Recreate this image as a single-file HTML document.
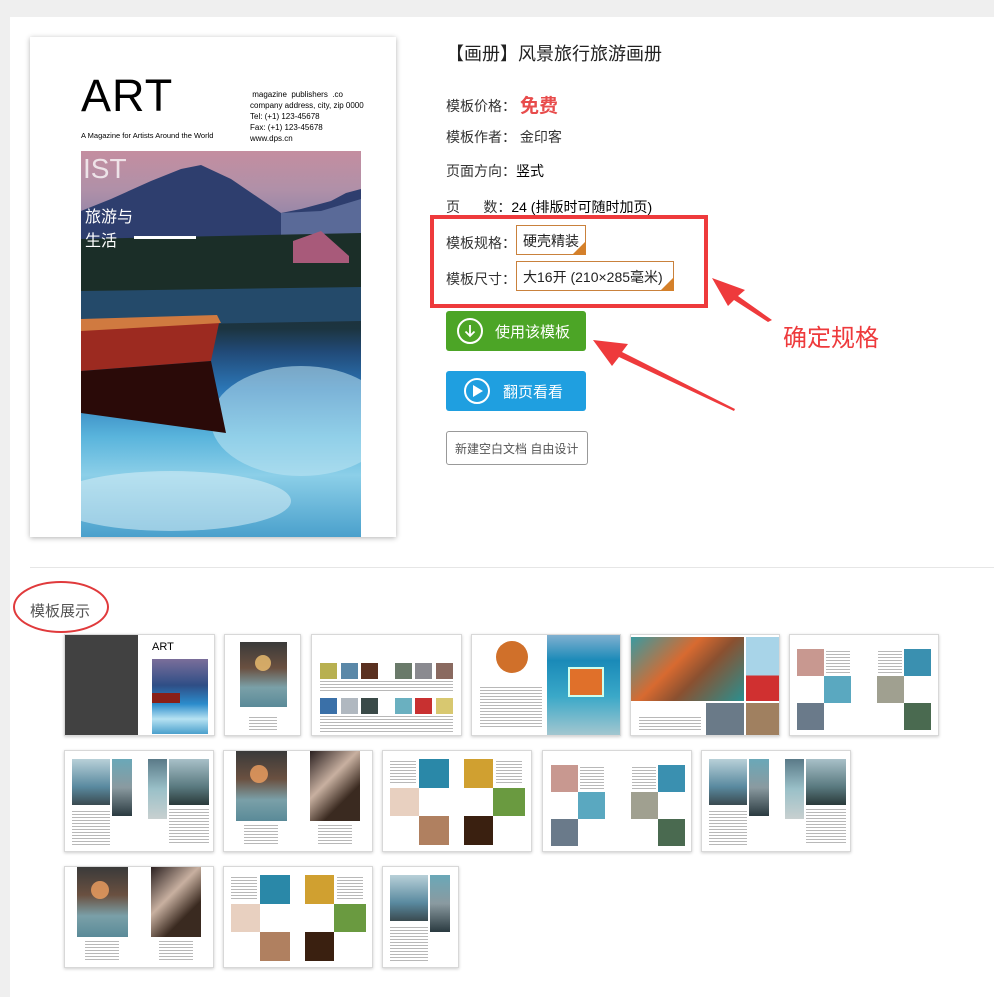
<!DOCTYPE html>
<html><head><meta charset="utf-8"><style>
*{margin:0;padding:0;box-sizing:border-box}
body{width:994px;height:990px;background:#efefef;position:relative;overflow:hidden;font-family:"Liberation Sans","Noto Sans CJK SC",sans-serif;color:#333}
.a{position:absolute}
.panel{left:10px;top:17px;width:990px;height:980px;background:#fff}
.t{position:absolute;background:#fff;border:1px solid #d8d8d8;box-shadow:0 1px 3px rgba(0,0,0,.2);overflow:hidden}
.t div{position:absolute}
.ln{background:repeating-linear-gradient(#999 0 1px,transparent 1px 3px);opacity:.7}
.lbl{font-size:14px;color:#333}
</style></head><body>
<div class="a panel"></div>

<!-- cover -->
<div class="a" style="left:30px;top:37px;width:366px;height:500px;background:#fff;box-shadow:0 1px 5px rgba(0,0,0,.3)"></div>
<div class="a" style="left:81px;top:70px;font-size:45px;color:#000;letter-spacing:1px">ART</div>
<div class="a" style="left:81px;top:131px;font-size:7.5px;color:#000">A Magazine for Artists Around the World</div>
<div class="a" style="left:250px;top:89px;font-size:8px;color:#000;line-height:11px">&nbsp;magazine &nbsp;publishers &nbsp;.co<br>company address, city, zip 0000<br>Tel: (+1) 123-45678<br>Fax: (+1) 123-45678<br>www.dps.cn</div>
<div class="a" style="left:81px;top:151px;width:280px;height:386px;overflow:hidden;background:linear-gradient(180deg,#c48ea0 0%,#b090a8 10%,#8a82a8 20%,#4a5a80 30%,#1f3038 40%,#1c3440 46%,#214a78 52%,#2c78b8 62%,#59b4dc 74%,#8ccfe8 84%,#4aa0cc 100%)">
  <svg width="280" height="386" style="position:absolute;left:0;top:0">
    <polygon points="0,60 30,48 70,30 100,18 120,14 150,28 175,45 200,62 220,58 250,50 265,42 280,38 280,120 0,120" fill="#2e3e6e"/>
    <polygon points="200,62 240,60 280,48 280,90 200,90" fill="#5a6a98"/>
    <polygon points="0,88 280,82 280,140 0,142" fill="#1b2e28"/>
    <polygon points="0,140 280,136 280,170 0,175" fill="#244a6a"/>
    <polygon points="212,90 240,80 268,105 268,112 212,112" fill="#a85a7a"/>
    <ellipse cx="220" cy="270" rx="90" ry="55" fill="#bfe6f3" opacity=".55"/>
    <ellipse cx="90" cy="350" rx="120" ry="30" fill="#d9eef6" opacity=".55"/>
    <polygon points="0,176 138,172 130,210 0,220" fill="#9c2a20"/>
    <polygon points="0,168 136,164 140,172 0,180" fill="#d07a40"/>
    <polygon points="0,220 130,210 145,282 0,262" fill="#2a0a08"/>
  </svg>
  <div class="a" style="left:2px;top:2px;font-size:28px;color:rgba(255,255,255,.75)">IST</div>
  <div class="a" style="left:4px;top:52px;font-size:16px;color:#fff;font-family:'Noto Sans CJK SC',sans-serif">旅游与</div>
  <div class="a" style="left:4px;top:76px;font-size:16px;color:#fff;font-family:'Noto Sans CJK SC',sans-serif">生活</div>
  <div class="a" style="left:53px;top:85px;width:62px;height:3px;background:#fff"></div>
</div>

<!-- info -->
<div class="a" style="left:446px;top:40px;font-size:18px;color:#222">【画册】风景旅行旅游画册</div>
<div class="a lbl" style="left:446px;top:96px">模板价格：</div>
<div class="a" style="left:520px;top:91px;font-size:19px;color:#e84c4c;font-weight:bold">免费</div>
<div class="a lbl" style="left:446px;top:127px">模板作者： 金印客</div>
<div class="a lbl" style="left:446px;top:161px">页面方向：<span style="color:#000">竖式</span></div>
<div class="a lbl" style="left:446px;top:197px">页 &nbsp; &nbsp; &nbsp;数：<span style="color:#000">24 (排版时可随时加页)</span></div>
<div class="a" style="left:430px;top:215px;width:278px;height:93px;border:4px solid #ee3a3c"></div>
<div class="a lbl" style="left:446px;top:233px">模板规格：</div>
<div class="a" style="left:516px;top:225px;width:70px;height:30px;border:1px solid #c9813c;font-size:14px;padding:5px 0 0 6px;color:#222">硬壳精装</div>
<div class="a" style="left:572px;top:241px;width:0;height:0;border-left:14px solid transparent;border-bottom:14px solid #d4802a"></div>
<div class="a lbl" style="left:446px;top:269px">模板尺寸：</div>
<div class="a" style="left:516px;top:261px;width:158px;height:30px;border:1px solid #c9813c;font-size:14px;padding:5px 0 0 6px;color:#222;white-space:nowrap">大16开 (210×285毫米)</div>
<div class="a" style="left:660px;top:277px;width:0;height:0;border-left:14px solid transparent;border-bottom:14px solid #d4802a"></div>

<div class="a" style="left:446px;top:311px;width:140px;height:40px;background:#4ca526;border-radius:3px;color:#fff;font-size:15px">
  <div class="a" style="left:11px;top:7px;width:26px;height:26px;border:2px solid #fff;border-radius:50%"></div>
  <svg class="a" style="left:16px;top:12px" width="16" height="16"><path d="M8 2v11M3.5 8.5L8 13l4.5-4.5" stroke="#fff" stroke-width="1.8" fill="none"/></svg>
  <div class="a" style="left:49px;top:10px">使用该模板</div>
</div>
<div class="a" style="left:446px;top:371px;width:140px;height:40px;background:#1f9fe0;border-radius:3px;color:#fff;font-size:15px">
  <div class="a" style="left:18px;top:7px;width:26px;height:26px;border:2px solid #fff;border-radius:50%"></div>
  <svg class="a" style="left:26px;top:14px" width="12" height="12"><polygon points="1,0 11,6 1,12" fill="#fff"/></svg>
  <div class="a" style="left:57px;top:10px">翻页看看</div>
</div>
<div class="a" style="left:446px;top:431px;width:142px;height:34px;border:1px solid #999;border-radius:3px;font-size:12px;color:#555;padding:8px 0 0 8px">新建空白文档 自由设计</div>

<div class="a" style="left:783px;top:318px;font-size:24px;color:#ee3a3c">确定规格</div>
<svg class="a" style="left:0;top:0" width="994" height="990">
  <polygon points="712,278 745,290 738,296 772,320 768,322 734,300 728,306" fill="#ee3a3c"/>
  <polygon points="593,340 628,344 622,352 735,409 734,411 619,357 612,366" fill="#ee3a3c"/>
  <ellipse cx="61" cy="607" rx="47" ry="25" fill="none" stroke="#e03a3c" stroke-width="2"/>
</svg>

<div class="a" style="left:30px;top:567px;width:964px;height:1px;background:#e6e6e6"></div>
<div class="a" style="left:30px;top:600px;font-size:15px;color:#555">模板展示</div>

<!-- thumbnails row1 -->
<div class="t" style="left:64px;top:634px;width:151px;height:102px">
  <div style="left:0;top:0;width:73px;height:102px;background:#414141"></div>
  <div style="left:87px;top:6px;font-size:11px;color:#000">ART</div>
  <div style="left:87px;top:24px;width:56px;height:75px;background:linear-gradient(#7a6e9a,#2f4e86 35%,#2b8ccc 60%,#b6e2f2 80%,#4aa0cc)"></div>
  <div style="left:87px;top:58px;width:28px;height:10px;background:#8a2018"></div>
</div>
<div class="t" style="left:224px;top:634px;width:77px;height:102px">
  <div style="left:15px;top:7px;width:47px;height:65px;background:linear-gradient(#3a3a3a,#6a5040 40%,#7aa0a8 70%,#5a8a98)"></div>
  <div style="left:30px;top:20px;width:16px;height:16px;border-radius:50%;background:#f0c070;opacity:.8"></div>
  <div class="ln" style="left:24px;top:82px;width:28px;height:14px"></div>
</div>
<div class="t" style="left:311px;top:634px;width:151px;height:102px">
  <div style="left:8px;top:28px;width:17px;height:16px;background:#b8b050"></div><div style="left:29px;top:28px;width:17px;height:16px;background:#5a88a8"></div><div style="left:49px;top:28px;width:17px;height:16px;background:#5a3020"></div>
  <div style="left:83px;top:28px;width:17px;height:16px;background:#6a7a6a"></div><div style="left:103px;top:28px;width:17px;height:16px;background:#8a8a90"></div><div style="left:124px;top:28px;width:17px;height:16px;background:#8a6a60"></div>
  <div style="left:8px;top:63px;width:17px;height:16px;background:#3a70a8"></div><div style="left:29px;top:63px;width:17px;height:16px;background:#b0b8c0"></div><div style="left:49px;top:63px;width:17px;height:16px;background:#3a4a48"></div>
  <div style="left:83px;top:63px;width:17px;height:16px;background:#6ab0c0"></div><div style="left:103px;top:63px;width:17px;height:16px;background:#c83030"></div><div style="left:124px;top:63px;width:17px;height:16px;background:#d8c870"></div>
  <div class="ln" style="left:8px;top:46px;width:133px;height:12px"></div><div class="ln" style="left:8px;top:81px;width:133px;height:16px"></div>
</div>
<div class="t" style="left:471px;top:634px;width:150px;height:102px">
  <div style="left:24px;top:6px;width:32px;height:32px;border-radius:50%;background:#d0702a"></div>
  <div class="ln" style="left:8px;top:52px;width:62px;height:40px"></div>
  <div style="left:75px;top:0;width:75px;height:102px;background:linear-gradient(#80b0d0,#1a8ab8 25%,#3aa8c8 60%,#a8c8d0)"></div>
  <div style="left:96px;top:32px;width:36px;height:30px;background:#e0702a;border:2px solid #cfe"></div>
</div>
<div class="t" style="left:630px;top:634px;width:150px;height:102px">
  <div style="left:0;top:2px;width:113px;height:64px;background:linear-gradient(135deg,#3a9aa0,#d86a30 40%,#8a5030 60%,#2a9090)"></div>
  <div style="left:115px;top:2px;width:35px;height:64px;background:linear-gradient(#a8d4e8 60%,#d03030 60%)"></div>
  <div style="left:75px;top:68px;width:38px;height:34px;background:#6a7a88"></div>
  <div style="left:115px;top:68px;width:35px;height:34px;background:#a08060"></div>
  <div class="ln" style="left:8px;top:82px;width:62px;height:14px"></div>
</div>
<div class="t" style="left:789px;top:634px;width:150px;height:102px">
  <div style="left:7px;top:14px;width:27px;height:27px;background:#c89890"></div><div style="left:34px;top:41px;width:27px;height:27px;background:#5aa8c0"></div><div style="left:7px;top:68px;width:27px;height:27px;background:#6a7a8a"></div>
  <div style="left:114px;top:14px;width:27px;height:27px;background:#3a90b0"></div><div style="left:87px;top:41px;width:27px;height:27px;background:#a0a090"></div><div style="left:114px;top:68px;width:27px;height:27px;background:#4a6a50"></div>
  <div class="ln" style="left:36px;top:16px;width:24px;height:22px"></div><div class="ln" style="left:88px;top:16px;width:24px;height:22px"></div>
</div>

<!-- row2 -->
<div class="t" style="left:64px;top:750px;width:150px;height:102px">
  <div style="left:7px;top:8px;width:38px;height:46px;background:linear-gradient(#b8d0d8,#5a8aa0 60%,#3a4a50)"></div>
  <div style="left:47px;top:8px;width:20px;height:57px;background:linear-gradient(#6aa8b8,#8a9aa0 50%,#2a3a40)"></div>
  <div style="left:83px;top:8px;width:19px;height:60px;background:linear-gradient(#5a7a88,#9ac0c8 50%,#c8d0d0)"></div>
  <div style="left:104px;top:8px;width:40px;height:46px;background:linear-gradient(#a8c0c8,#5a7a80 60%,#2a3a3a)"></div>
  <div class="ln" style="left:7px;top:60px;width:38px;height:36px"></div><div class="ln" style="left:104px;top:58px;width:40px;height:36px"></div>
</div>
<div class="t" style="left:223px;top:750px;width:150px;height:102px">
  <div style="left:12px;top:0;width:51px;height:70px;background:linear-gradient(#3a3a3a,#6a5040 40%,#7aa0a8 70%,#5a8a98)"></div>
  <div style="left:26px;top:14px;width:18px;height:18px;border-radius:50%;background:#f0a060;opacity:.8"></div>
  <div style="left:86px;top:0;width:50px;height:70px;background:linear-gradient(135deg,#2a2020,#c8b0a0 40%,#3a2a20 70%)"></div>
  <div class="ln" style="left:20px;top:74px;width:34px;height:20px"></div><div class="ln" style="left:94px;top:74px;width:34px;height:20px"></div>
</div>
<div class="t" style="left:382px;top:750px;width:150px;height:102px">
  <div style="left:36px;top:8px;width:30px;height:29px;background:#2a88a8"></div><div style="left:81px;top:8px;width:29px;height:29px;background:#d0a030"></div>
  <div style="left:7px;top:37px;width:29px;height:28px;background:#e8d0c0"></div><div style="left:110px;top:37px;width:32px;height:28px;background:#6a9a40"></div>
  <div style="left:36px;top:65px;width:30px;height:29px;background:#b08060"></div><div style="left:81px;top:65px;width:29px;height:29px;background:#3a2010"></div>
  <div class="ln" style="left:7px;top:10px;width:26px;height:24px"></div><div class="ln" style="left:113px;top:10px;width:26px;height:24px"></div>
</div>
<div class="t" style="left:542px;top:750px;width:150px;height:102px">
  <div style="left:8px;top:14px;width:27px;height:27px;background:#c89890"></div><div style="left:35px;top:41px;width:27px;height:27px;background:#5aa8c0"></div><div style="left:8px;top:68px;width:27px;height:27px;background:#6a7a8a"></div>
  <div style="left:115px;top:14px;width:27px;height:27px;background:#3a90b0"></div><div style="left:88px;top:41px;width:27px;height:27px;background:#a0a090"></div><div style="left:115px;top:68px;width:27px;height:27px;background:#4a6a50"></div>
  <div class="ln" style="left:37px;top:16px;width:24px;height:22px"></div><div class="ln" style="left:89px;top:16px;width:24px;height:22px"></div>
</div>
<div class="t" style="left:701px;top:750px;width:150px;height:102px">
  <div style="left:7px;top:8px;width:38px;height:46px;background:linear-gradient(#b8d0d8,#5a8aa0 60%,#3a4a50)"></div>
  <div style="left:47px;top:8px;width:20px;height:57px;background:linear-gradient(#6aa8b8,#8a9aa0 50%,#2a3a40)"></div>
  <div style="left:83px;top:8px;width:19px;height:60px;background:linear-gradient(#5a7a88,#9ac0c8 50%,#c8d0d0)"></div>
  <div style="left:104px;top:8px;width:40px;height:46px;background:linear-gradient(#a8c0c8,#5a7a80 60%,#2a3a3a)"></div>
  <div class="ln" style="left:7px;top:60px;width:38px;height:36px"></div><div class="ln" style="left:104px;top:58px;width:40px;height:36px"></div>
</div>

<!-- row3 -->
<div class="t" style="left:64px;top:866px;width:150px;height:102px">
  <div style="left:12px;top:0;width:51px;height:70px;background:linear-gradient(#3a3a3a,#6a5040 40%,#7aa0a8 70%,#5a8a98)"></div>
  <div style="left:26px;top:14px;width:18px;height:18px;border-radius:50%;background:#f0a060;opacity:.8"></div>
  <div style="left:86px;top:0;width:50px;height:70px;background:linear-gradient(135deg,#2a2020,#c8b0a0 40%,#3a2a20 70%)"></div>
  <div class="ln" style="left:20px;top:74px;width:34px;height:20px"></div><div class="ln" style="left:94px;top:74px;width:34px;height:20px"></div>
</div>
<div class="t" style="left:223px;top:866px;width:150px;height:102px">
  <div style="left:36px;top:8px;width:30px;height:29px;background:#2a88a8"></div><div style="left:81px;top:8px;width:29px;height:29px;background:#d0a030"></div>
  <div style="left:7px;top:37px;width:29px;height:28px;background:#e8d0c0"></div><div style="left:110px;top:37px;width:32px;height:28px;background:#6a9a40"></div>
  <div style="left:36px;top:65px;width:30px;height:29px;background:#b08060"></div><div style="left:81px;top:65px;width:29px;height:29px;background:#3a2010"></div>
  <div class="ln" style="left:7px;top:10px;width:26px;height:24px"></div><div class="ln" style="left:113px;top:10px;width:26px;height:24px"></div>
</div>
<div class="t" style="left:382px;top:866px;width:77px;height:102px">
  <div style="left:7px;top:8px;width:38px;height:46px;background:linear-gradient(#b8d0d8,#5a8aa0 60%,#3a4a50)"></div>
  <div style="left:47px;top:8px;width:20px;height:57px;background:linear-gradient(#6aa8b8,#8a9aa0 50%,#2a3a40)"></div>
  <div class="ln" style="left:7px;top:60px;width:38px;height:36px"></div>
</div>
</body></html>
